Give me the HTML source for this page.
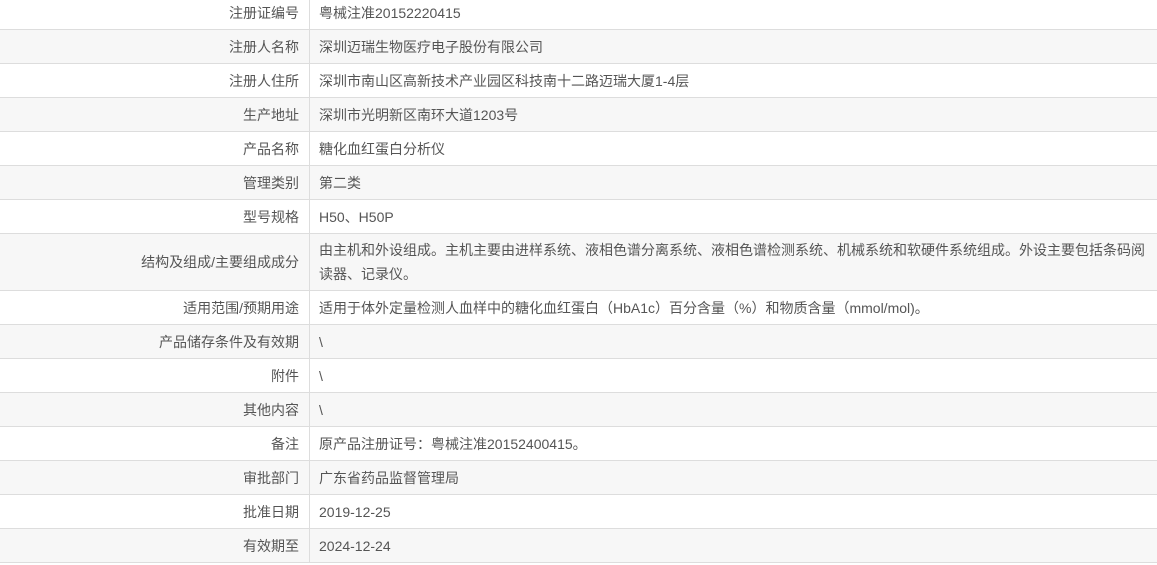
<!DOCTYPE html>
<html><head><meta charset="utf-8"><style>
html,body{margin:0;padding:0;background:#fff;width:1157px;height:565px;overflow:hidden}
body{font-family:"Liberation Sans","Noto Sans CJK SC",sans-serif;font-size:14px;color:#555}
table{position:absolute;left:0;top:-4px;width:1157px;border-collapse:collapse;table-layout:fixed}
td{border-bottom:1px solid #ddd;height:33px;padding:0 10px 0 9px;line-height:24px;vertical-align:middle}
td.l{width:289px;text-align:right;border-right:1px solid #ddd;padding:0 10px 0 10px}
tr:nth-child(even) td{background:#f7f7f7}
tr.tall td{height:56px}
</style></head><body>
<table>
<tr><td class="l">注册证编号</td><td>粤械注准20152220415</td></tr>
<tr><td class="l">注册人名称</td><td>深圳迈瑞生物医疗电子股份有限公司</td></tr>
<tr><td class="l">注册人住所</td><td>深圳市南山区高新技术产业园区科技南十二路迈瑞大厦1-4层</td></tr>
<tr><td class="l">生产地址</td><td>深圳市光明新区南环大道1203号</td></tr>
<tr><td class="l">产品名称</td><td>糖化血红蛋白分析仪</td></tr>
<tr><td class="l">管理类别</td><td>第二类</td></tr>
<tr><td class="l">型号规格</td><td>H50、H50P</td></tr>
<tr class="tall"><td class="l">结构及组成/主要组成成分</td><td>由主机和外设组成。主机主要由进样系统、液相色谱分离系统、液相色谱检测系统、机械系统和软硬件系统组成。外设主要包括条码阅读器、记录仪。</td></tr>
<tr><td class="l">适用范围/预期用途</td><td>适用于体外定量检测人血样中的糖化血红蛋白（HbA1c）百分含量（%）和物质含量（mmol/mol)。</td></tr>
<tr><td class="l">产品储存条件及有效期</td><td>\</td></tr>
<tr><td class="l">附件</td><td>\</td></tr>
<tr><td class="l">其他内容</td><td>\</td></tr>
<tr><td class="l">备注</td><td>原产品注册证号：粤械注准20152400415。</td></tr>
<tr><td class="l">审批部门</td><td>广东省药品监督管理局</td></tr>
<tr><td class="l">批准日期</td><td>2019-12-25</td></tr>
<tr><td class="l">有效期至</td><td>2024-12-24</td></tr>
</table>
</body></html>
